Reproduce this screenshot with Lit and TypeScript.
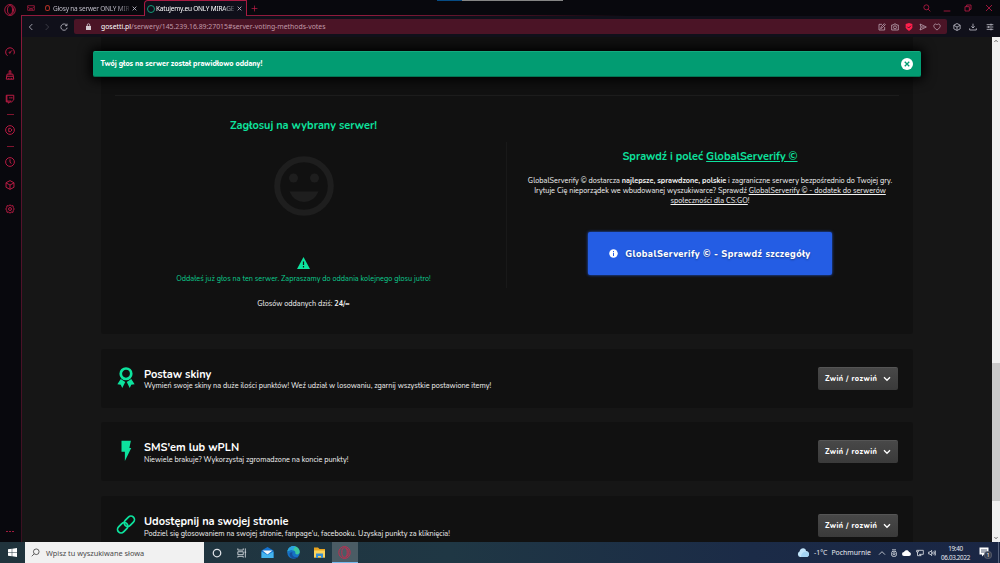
import { LitElement, html, css, svg } from "lit";
import { customElement } from "lit/decorators.js";

const icons = {
  opera: svg`<ellipse cx="12" cy="12" rx="10.500" ry="11"/><ellipse cx="12" cy="12" rx="5" ry="8.800"/><path d="M15 3.500c5.500 3.500 5.500 13.500 0 17"/>`,
  speed: svg`<path d="M6 21A10.500 10.500 0 1 1 22.500 12c0 2-.4 4-1.500 5.500M12 13l5-5"/><circle cx="11.500" cy="13.500" r="1.500"/>`,
  bag: svg`<path d="M5 10h14l2 12H3zM4 15h16M10 10V2h4v8M9 22v-3M15 22v-3"/>`,
  twitch: svg`<path d="M3 3h18v11l-5 5h-4l-4 3v-3H3z"/><path d="M4.500 3v15M12 7v4M16.500 7v4M3 17h12"/>`,
  play: svg`<circle cx="12" cy="12" r="10.500"/><path d="M9 8h4l4 4-4 4H9z"/>`,
  clock: svg`<circle cx="12" cy="12" r="10.500"/><path d="M12 5.500V12l3 4"/>`,
  box: svg`<path d="M12 1.500l9.500 5v11L12 22.500l-9.500-5v-11zM2.500 7l9.500 5 9.500-5M12 12v10"/>`,
  gear: svg`<path d="M12 2l3 2.500 4-.5 1 4.500 2 3.500-2 3.500-1 4.500-4-.5-3 2.500-3-2.500-4 .5-1-4.500L2 12l2-3.500L5 4l4 .5z"/><circle cx="12" cy="12" r="3.500"/>`,
  card: svg`<path d="M2 5h20v14H2zM2 8l6 5h8l6-5M8 19v-4h8v4"/>`,
  close: svg`<path d="M3 3l18 18M21 3L3 21"/>`,
  plus: svg`<path d="M12 2v20M2 12h20"/>`,
  back: svg`<path d="M16 3L7 12l9 9"/>`,
  forward: svg`<path d="M8 3l9 9-9 9"/>`,
  reload: svg`<path d="M20 7a9.500 9.500 0 1 0 1.500 7M21 2v6h-6"/>`,
  search: svg`<circle cx="10" cy="10" r="7.500"/><path d="M15.500 15.500L22 22"/>`,
  minimize: svg`<path d="M2 21h20"/>`,
  restore: svg`<path d="M3 8h13v13H3zM8 8V3h13v13h-5"/>`,
  edit: svg`<path d="M12 4H3v17h17v-9M8 17l2-6 9-9 3 3-9 9z"/>`,
  camera: svg`<path d="M2 6h5l2-3h6l2 3h5v15H2z"/><circle cx="12" cy="13" r="4.500"/>`,
  send: svg`<path d="M3 3l19 9-19 9 3-9zM6 12h10"/>`,
  heart: svg`<path d="M12 21C-3 11 3 3 7.500 3 10 3 12 6 12 6s2-3 4.500-3C21 3 27 11 12 21z"/>`,
  download: svg`<path d="M12 2v13M7 10l5 5 5-5M2 16v5h20v-5"/>`,
  sliders: svg`<path d="M2 5h20M2 12h20M2 19h20M15 2v6M8 9v6M15 16v6"/>`,
  chevron: svg`<path d="M3 7l9 9 9-9"/>`,
  chevronUp: svg`<path d="M3 17l9-9 9 9"/>`,
  camTray: svg`<rect x="5" y="7" width="14" height="15" rx="4"/><circle cx="12" cy="14" r="3"/><path d="M6 2.500h12"/>`,
  monitor: svg`<path d="M7 4h15v12H9M2 4h5v5H2zM4.500 9v11H16M14 16v4"/>`,
  volume: svg`<path d="M2 9h4l5-5v16l-5-5H2zM14 9q2 3 0 6M17.500 6.500q4 5.500 0 11M21 4q5 8 0 16"/>`,
  ring: svg`<circle cx="12" cy="12" r="9"/>`,
  link: svg`<g transform="rotate(-45 12 12)"><rect x="-2" y="7.300" width="15.500" height="9.400" rx="4.700"/><rect x="10.500" y="7.300" width="15.500" height="9.400" rx="4.700"/></g>`,
};

const icon = (name: keyof typeof icons, cls = "") =>
  html`<svg class="icon ${cls}" viewBox="0 0 24 24">${icons[name]}</svg>`;

const methods = [
  {
    id: "skins",
    title: "Postaw skiny",
    text: "Wymień swoje skiny na duże ilości punktów! Weź udział w losowaniu, zgarnij wszystkie postawione itemy!",
    icon: html`<svg class="method-icon" viewBox="0 0 24 28">
      <path d="M5 16l-4.500 7 4.500.5L7 28l4-8zM19 16l4.500 7-4.500.5L17 28l-4-8z" fill="#0de39e" />
      <circle cx="12" cy="9" r="7" fill="#111" stroke="#0de39e" stroke-width="3.600" />
    </svg>`,
  },
  {
    id: "sms",
    title: "SMS'em lub wPLN",
    text: "Niewiele brakuje? Wykorzystaj zgromadzone na koncie punkty!",
    icon: html`<svg class="method-icon" viewBox="0 0 24 28">
      <path d="M6 1h12.500l-2 9.500H19L10.500 28V15.500H6z" fill="#0de39e" />
    </svg>`,
  },
  {
    id: "share",
    title: "Udostępnij na swojej stronie",
    text: "Podziel się głosowaniem na swojej stronie, fanpage'u, facebooku. Uzyskaj punkty za kliknięcia!",
    icon: icon("link", "method-icon link"),
  },
];

@customElement("browser-sidebar")
class BrowserSidebar extends LitElement {
  static styles = css`
    :host {
      display: flex;
      flex-direction: column;
      align-items: center;
      box-sizing: border-box;
      width: 21px;
      padding-right: 1px;
      background: #08080d;
    }
    .icon {
      width: 10px;
      height: 10px;
      margin: 6.750px 0;
      fill: none;
      stroke: #b81b43;
      stroke-width: 2.400;
    }
    .logo {
      width: 12px;
      height: 12px;
      margin: 4px 0 24px;
      stroke-width: 1.800;
    }
    .dash {
      width: 7px;
      height: 1px;
      margin: 3.500px 0;
      background: #80152f;
    }
    .dots {
      display: flex;
      gap: 1.500px;
      margin: auto 0 10px;
    }
    .dots i {
      width: 1.500px;
      height: 1.500px;
      background: #a01a3c;
    }
  `;

  render() {
    return html`
      ${icon("opera", "logo")} ${icon("speed")} ${icon("bag")} ${icon("twitch")}
      <div class="dash"></div>
      ${icon("play")}
      <div class="dash"></div>
      ${icon("clock")} ${icon("box")} ${icon("gear")}
      <div class="dots"><i></i><i></i><i></i></div>
    `;
  }
}

@customElement("browser-bar")
class BrowserBar extends LitElement {
  static styles = css`
    :host {
      display: block;
      height: 37px;
      background: #08080d;
      font-family: "Noto Sans", sans-serif;
      position: relative;
    }
    .icon {
      width: 8px;
      height: 8px;
      flex: none;
      fill: none;
      stroke: #c2c0cc;
      stroke-width: 2.400;
    }
    .tabs {
      display: flex;
      height: 16px;
      box-sizing: border-box;
      align-items: center;
      background: linear-gradient(90deg, #8f1a3c 0 35%, #08080d 62%) bottom / 100% 1px no-repeat;
    }
    .tab {
      display: flex;
      align-items: center;
      box-sizing: border-box;
      height: 16px;
      width: 101px;
      padding: 0 7px 0 1px;
      color: #bdbbc6;
      font-size: 6.500px;
      letter-spacing: -0.200px;
    }
    .tab span {
      flex: 1;
      white-space: nowrap;
      mask-image: linear-gradient(90deg, #000 84%, #0004);
    }
    .tab .icon {
      width: 5px;
      height: 5px;
      stroke-width: 4;
      margin-left: 3px;
    }
    .tab.active {
      width: 103px;
      padding: 0 6px 0 2px;
      background: #0f0f1a;
      border: 1px solid #a81b42;
      border-bottom: 0;
      border-radius: 4px 1px 0 0;
      color: #fff;
    }
    .drop,
    .target {
      box-sizing: border-box;
      flex: none;
      width: 5px;
      height: 6px;
      margin: 0 3px 0 1px;
      border: 1.500px solid #b03026;
      border-radius: 60% 60% 50% 50%;
    }
    .target {
      width: 8px;
      height: 8px;
      margin: 0 1px 0 0;
      border: 1.500px solid #119c76;
      border-radius: 50%;
    }
    .mail {
      margin: 0 8px 0 5px;
      stroke: #a01a3c;
    }
    .red {
      stroke: #c01c48;
    }
    .plus {
      width: 7px;
      height: 7px;
      margin-left: 4px;
    }
    .window {
      display: flex;
      gap: 12.800px;
      margin: 0 7px 0 auto;
    }
    .tools {
      display: flex;
      align-items: center;
      height: 21px;
      background: #10101a;
    }
    .tools > .icon {
      margin-left: 8.500px;
    }
    .tools > .back {
      margin-left: 4.500px;
    }
    .tools > .cube {
      margin-left: 6px;
    }
    .tools > .dim {
      stroke: #44444f;
    }
    .url {
      display: flex;
      align-items: center;
      width: 873px;
      height: 15px;
      margin-left: 6px;
      box-sizing: border-box;
      padding: 0 6px 0 12px;
      border-radius: 2px;
      background: #4b1426;
      color: #c09aa8;
      font-size: 6.870px;
    }
    .url b {
      color: #fff;
      font-weight: 400;
    }
    .url span {
      margin: 0 auto 0 10.500px;
    }
    .url .icon {
      margin-left: 5.700px;
      stroke: #bba5b2;
    }
    .url .lock {
      width: 5px;
      height: 7px;
      margin: 0;
    }
    .url .shield {
      stroke: none;
    }
    .edge {
      position: absolute;
      top: 0;
      left: 415px;
      width: 126px;
      height: 1px;
      background: linear-gradient(90deg, #064b83 20%, #858585 20%);
    }
  `;

  render() {
    return html`
      <div class="edge"></div>
      <div class="tabs">
        ${icon("card", "mail")}
        <div class="tab"><i class="drop"></i><span>Głosy na serwer ONLY MIR</span>${icon("close")}</div>
        <div class="tab active">
          <i class="target"></i><span>Katujemy.eu ONLY MIRAGE</span>${icon("close")}
        </div>
        ${icon("plus", "red plus")}
        <div class="window">
          ${icon("search", "red")} ${icon("minimize", "red")} ${icon("restore", "red")} ${icon("close", "red")}
        </div>
      </div>
      <div class="tools">
        ${icon("back", "back")} ${icon("forward", "dim")} ${icon("reload")}
        <div class="url">
          <svg class="lock" viewBox="0 0 10 14">
            <path d="M2.500 6V4a2.500 2.500 0 0 1 5 0v2" fill="none" stroke="#d5c8d0" stroke-width="1.600" />
            <rect y="6" width="10" height="8" fill="#d5c8d0" />
          </svg>
          <span><b>gosetti.pl</b>/serwery/145.239.16.89:27015#server-voting-methods-votes</span>
          ${icon("edit")} ${icon("camera")}
          <svg class="icon shield" viewBox="0 0 24 24">
            <path d="M12 0l10 3v10q-1 7-10 11Q3 20 2 13V3z" fill="#ff1f4c" />
            <path d="M7 11l4 4 7-7" fill="none" stroke="#4b1426" stroke-width="3" />
          </svg>
          ${icon("send")} ${icon("heart")}
        </div>
        ${icon("box", "cube")} ${icon("download")} ${icon("sliders")}
      </div>
    `;
  }
}

@customElement("voting-page")
class VotingPage extends LitElement {
  static styles = css`
    :host {
      display: block;
      position: relative;
      overflow: hidden;
      background: #161616;
      color: #f2f2f2;
      font-family: Nunito, Lato, sans-serif;
      font-size: 7.300px;
    }
    .alert {
      position: absolute;
      top: 14px;
      left: 71px;
      width: 828px;
      height: 26px;
      box-sizing: border-box;
      display: flex;
      align-items: center;
      justify-content: space-between;
      padding: 0 8px 0 7.500px;
      background: #029c72;
      border-top: 1px solid #14ab80;
      border-bottom: 1px solid #047453;
      border-radius: 2px;
      box-shadow: 0 0 12px 3px #000;
      color: #fff;
      font-size: 7.150px;
      font-weight: 800;
    }
    .alert svg {
      width: 12px;
      height: 12px;
    }
    .column {
      width: 812px;
      margin-left: 79px;
      display: flex;
      flex-direction: column;
      gap: 14.700px;
    }
    .panel {
      height: 297px;
      box-sizing: border-box;
      padding: 58px 14px 0;
      background: #111;
      border-radius: 0 0 3px 3px;
    }
    .halves {
      display: grid;
      grid-template-columns: 377px 1fr;
      border-top: 1px solid #1c1c1c;
      text-align: center;
    }
    h2 {
      margin: 0;
      color: #0de39e;
      font-size: 10.950px;
      line-height: 16px;
      font-weight: 700;
    }
    a {
      text-decoration: underline;
    }
    .vote {
      padding-top: 22px;
    }
    .face {
      display: block;
      width: 60px;
      height: 60px;
      margin: 22px auto 41px;
    }
    .warn {
      display: block;
      width: 13px;
      height: 12px;
      margin: 0 auto;
    }
    p {
      margin: 0;
      line-height: 10px;
    }
    .done {
      margin-top: 5px;
      color: #0ccb8e;
    }
    .count {
      margin-top: 15px;
    }
    .promo {
      height: 146px;
      margin: 46px 0 0 14px;
      border-left: 1px solid #191919;
      padding-top: 7px;
      box-sizing: border-box;
      padding-left: 14px;
    }
    .promo p {
      margin-top: 11px;
    }
    .promo-button {
      display: flex;
      align-items: center;
      justify-content: center;
      gap: 7px;
      width: 244px;
      height: 43px;
      margin: 26px auto 0;
      background: #245de4;
      border-radius: 2px;
      box-shadow: 0 0 3px #245de4;
      color: #fff;
      font-size: 9.200px;
      letter-spacing: 0.420px;
      font-weight: 800;
      text-shadow: 0 1px 2px #0006;
    }
    .promo-button svg {
      width: 9px;
      height: 9px;
    }
    .method {
      display: flex;
      align-items: center;
      height: 59px;
      box-sizing: border-box;
      padding: 0 15px 0 16px;
      background: #111;
      border-radius: 3px;
    }
    .method-icon {
      width: 18px;
      height: 21px;
      margin: 0 9px 2px 0;
    }
    .link {
      fill: none;
      stroke: #0de39e;
      stroke-width: 2.300;
      overflow: visible;
    }
    .method h3 {
      margin: 2.500px 0 -0.500px;
      font-size: 11px;
      line-height: 14px;
      color: #fff;
    }
    .toggle {
      display: flex;
      align-items: center;
      justify-content: space-between;
      width: 80px;
      height: 23px;
      margin-left: auto;
      box-sizing: border-box;
      padding: 0 7px;
      background: linear-gradient(#484848, #3a3a3a);
      border-top: 1px solid #555;
      border-radius: 2px;
      font-weight: 800;
      letter-spacing: 0.450px;
      color: #fff;
    }
    .toggle .icon {
      width: 8px;
      height: 8px;
      fill: none;
      stroke: #fff;
      stroke-width: 4;
    }
  `;

  render() {
    return html`
      <div class="column">
        <div class="panel">
          <div class="halves">
            <div class="vote">
              <h2>Zagłosuj na wybrany serwer!</h2>
              <svg class="face" viewBox="0 0 60 60" fill="#1e1e1e">
                <circle cx="30" cy="30" r="26.800" fill="none" stroke="#1e1e1e" stroke-width="6" />
                <circle cx="19.500" cy="22" r="4.500" />
                <circle cx="40.500" cy="22" r="4.500" />
                <path d="M15.500 35.500h29Q40 46 30 46T15.500 35.500z" />
              </svg>
              <svg class="warn" viewBox="0 0 26 24">
                <path d="M13 0l13 24H0z" fill="#0de39e" />
                <path d="M13 9v7M13 18v3" stroke="#111" stroke-width="2.400" />
              </svg>
              <p class="done">Oddałeś już głos na ten serwer. Zapraszamy do oddania kolejnego głosu jutro!</p>
              <p class="count">Głosów oddanych dziś: <b>24/∞</b></p>
            </div>
            <div class="promo">
              <h2>Sprawdź i poleć <a>GlobalServerify ©</a></h2>
              <p>
                GlobalServerify © dostarcza <b>najlepsze, sprawdzone, polskie</b> i zagraniczne serwery bezpośrednio do
                Twojej gry.<br />
                Irytuje Cię nieporządek we wbudowanej wyszukiwarce? Sprawdź
                <a>GlobalServerify © - dodatek do serwerów<br />społeczności dla CS:GO</a>!
              </p>
              <div class="promo-button">
                <svg viewBox="0 0 18 18">
                  <circle cx="9" cy="9" r="8.500" fill="#fff" />
                  <path d="M9 4v2.500M9 8v6" stroke="#245de4" stroke-width="2" />
                </svg>
                <span>GlobalServerify © - Sprawdź szczegóły</span>
              </div>
            </div>
          </div>
        </div>
        ${methods.map(
          (method) => html`
            <div class="method ${method.id}">
              ${method.icon}
              <div>
                <h3>${method.title}</h3>
                <p>${method.text}</p>
              </div>
              <div class="toggle"><span>Zwiń / rozwiń</span>${icon("chevron")}</div>
            </div>
          `
        )}
      </div>
      <div class="alert">
        <span>Twój głos na serwer został prawidłowo oddany!</span>
        <svg viewBox="0 0 24 24">
          <circle cx="12" cy="12" r="12" fill="#fff" />
          <path d="M7.500 7.500l9 9M16.500 7.500l-9 9" stroke="#029c72" stroke-width="2.600" />
        </svg>
      </div>
    `;
  }
}

@customElement("task-bar")
class TaskBar extends LitElement {
  static styles = css`
    :host {
      display: flex;
      align-items: center;
      height: 21px;
      background: linear-gradient(90deg, #20333c, #1f3744 45%, #1b2b47 75%, #1a2644);
      color: #e8ebf0;
      font-family: "Noto Sans", sans-serif;
      font-size: 6.900px;
    }
    .icon {
      width: 8px;
      height: 8px;
      flex: none;
      fill: none;
      stroke: #e0e3e8;
      stroke-width: 2.400;
    }
    .start {
      width: 9px;
      height: 9px;
      margin: 0 8px;
    }
    .search {
      display: flex;
      align-items: center;
      width: 179px;
      height: 21px;
      box-sizing: border-box;
      padding-left: 6px;
      background: #f1f1f1;
      color: #4a4a4a;
      font-size: 7.350px;
    }
    .search .icon {
      width: 9px;
      height: 9px;
      margin-right: 6px;
      stroke: #333;
      stroke-width: 2;
      transform: scaleX(-1);
    }
    .app {
      width: 25.600px;
      height: 21px;
      display: flex;
      align-items: center;
      justify-content: center;
    }
    .app svg {
      width: 13px;
      height: 13px;
    }
    .app .ring,
    .app .view {
      width: 10px;
      height: 10px;
      stroke-width: 3;
    }
    .app .view {
      stroke-width: 2;
    }
    .app.active {
      background: #4b5c65;
      box-sizing: border-box;
      border-bottom: 1px solid #76b9ed;
    }
    .active .icon {
      stroke: #c92b4e;
      stroke-width: 1.700;
    }
    .cloud {
      width: 12px;
      height: 9px;
      margin-right: 5px;
    }
    .weather {
      display: flex;
      align-items: center;
      margin-left: auto;
    }
    .weather span {
      margin-right: 4px;
    }
    .tray {
      display: flex;
      align-items: center;
      gap: 4.300px;
      margin-left: 3px;
    }
    .tray .drive {
      width: 9px;
      height: 6px;
    }
    .time {
      width: 29px;
      margin: 0 8.500px 0 5px;
      font-size: 6.300px;
      line-height: 9px;
      text-align: center;
      letter-spacing: -0.330px;
    }
    .note {
      width: 13px;
      height: 13px;
      margin-right: 6.500px;
    }
    .peek {
      width: 1px;
      height: 21px;
      margin-right: 1px;
      background: #55607a;
    }
  `;

  render() {
    return html`
      <svg class="start" viewBox="0 0 18 18" fill="#fff">
        <path d="M0 2.500L7.500 1.500V8.500H0zM8.500 1.300L18 0V8.500H8.500zM0 9.500H7.500V16.500L0 15.500zM8.500 9.500H18V18L8.500 16.700z" />
      </svg>
      <div class="search">${icon("search")}Wpisz tu wyszukiwane słowa</div>
      <div class="app">${icon("ring", "ring")}</div>
      <div class="app">
        <svg class="icon view" viewBox="0 0 24 24"><path d="M2 1v4h13V1M2 9h13v7H2zM2 23v-3h13v3M20 1v22M18 10h4" /></svg>
      </div>
      <div class="app">
        <svg viewBox="0 0 26 26">
          <path d="M1 9L13 2l12 7v15H1z" fill="#1573cf" />
          <path d="M1 11l12 7 12-7v13H1z" fill="#44b4ee" />
          <path d="M3 9h20l-10 8z" fill="#f1f6fa" />
        </svg>
      </div>
      <div class="app">
        <svg viewBox="0 0 26 26">
          <circle cx="13" cy="13" r="12.500" fill="#1672c4" />
          <path d="M1 11C3-3 25-3 25.500 12c0 6-9 6-9 2 2-5-8-9-15.500-3z" fill="#3cc6a0" />
          <path d="M1 11C3 0 12-1 17 1c-3 3-4 5-4 8-4-2-8-1-12 2z" fill="#2ba3e0" />
          <path d="M11 13c-3 8 6 11 12 8-6 7-17 4-18-4 0-3 3-5 6-4z" fill="#164e9c" />
        </svg>
      </div>
      <div class="app">
        <svg viewBox="0 0 26 26">
          <path d="M2 3h8l3 3h11v17H2z" fill="#e9a521" />
          <path d="M2 9h22v14H2z" fill="#fcd45c" />
          <path d="M6 15h14v9h-4v-4h-6v4H6z" fill="#388fd4" />
        </svg>
      </div>
      <div class="app active">${icon("opera")}</div>
      <div class="weather">
        <svg class="cloud" viewBox="0 0 24 18">
          <path d="M6 18a6 6 0 0 1-1-11C7-2 18-1 18 6c8 0 8 12 1 12z" fill="#c2e5fa" />
          <path d="M8 18c0-9 8-12 11-10 7 1 6 10 0 10z" fill="#a5d4f3" />
        </svg>
        <span>-1°C</span><span>Pochmurnie</span>
      </div>
      <div class="tray">
        ${icon("chevronUp")} ${icon("camTray")}
        <svg class="drive" viewBox="0 0 18 12">
          <path d="M4 12a4 4 0 0 1 0-8C6-1 13-1 14 4c5 0 5 8 0 8z" fill="#fff" />
        </svg>
        ${icon("monitor")} ${icon("volume")}
      </div>
      <div class="time">19:40<br />06.03.2022</div>
      <svg class="note" viewBox="0 0 26 26">
        <path d="M1 3h18v14H10l-4 4v-4H1z" fill="#fff" />
        <path d="M4 8h12M4 12h12" stroke="#1a2644" stroke-width="1.500" />
        <circle cx="18" cy="18" r="7.500" fill="#38404f" stroke="#778" />
        <text class="badge" x="18" y="22" font-size="11" font-family="Noto Sans" text-anchor="middle" fill="#fff">1</text>
      </svg>
      <i class="peek"></i>
    `;
  }
}

@customElement("app-root")
class AppRoot extends LitElement {
  static styles = css`
    :host {
      display: grid;
      grid-template-columns: 21px 1fr;
      grid-template-rows: 542px 21px;
      width: 1000px;
      height: 563px;
      overflow: hidden;
    }
    .window {
      display: grid;
      grid-template-rows: 37px 505px;
      grid-template-columns: 1fr;
      min-width: 0;
      padding-left: 1px;
      background: linear-gradient(#08080d 15px, #8f1a3c 15px, #56122b 200px, #3a1020);
    }
    .view {
      display: grid;
      grid-template-columns: 1fr 8px;
      height: 505px;
    }
    voting-page {
      height: 505px;
    }
    .scroll {
      display: flex;
      flex-direction: column;
      justify-content: space-between;
      align-items: center;
      background: linear-gradient(#f0f0f0 326px, #cacaca 326px 464px, #f0f0f0 464px);
    }
    .scroll .icon {
      width: 4px;
      height: 4px;
      margin: 2px 0;
      fill: none;
      stroke: #555;
      stroke-width: 6;
    }
    task-bar {
      grid-column: 1 / -1;
    }
  `;

  render() {
    return html`
      <browser-sidebar></browser-sidebar>
      <div class="window">
        <browser-bar></browser-bar>
        <div class="view">
          <voting-page></voting-page>
          <div class="scroll">${icon("chevronUp")}${icon("chevron")}</div>
        </div>
      </div>
      <task-bar></task-bar>
    `;
  }
}
